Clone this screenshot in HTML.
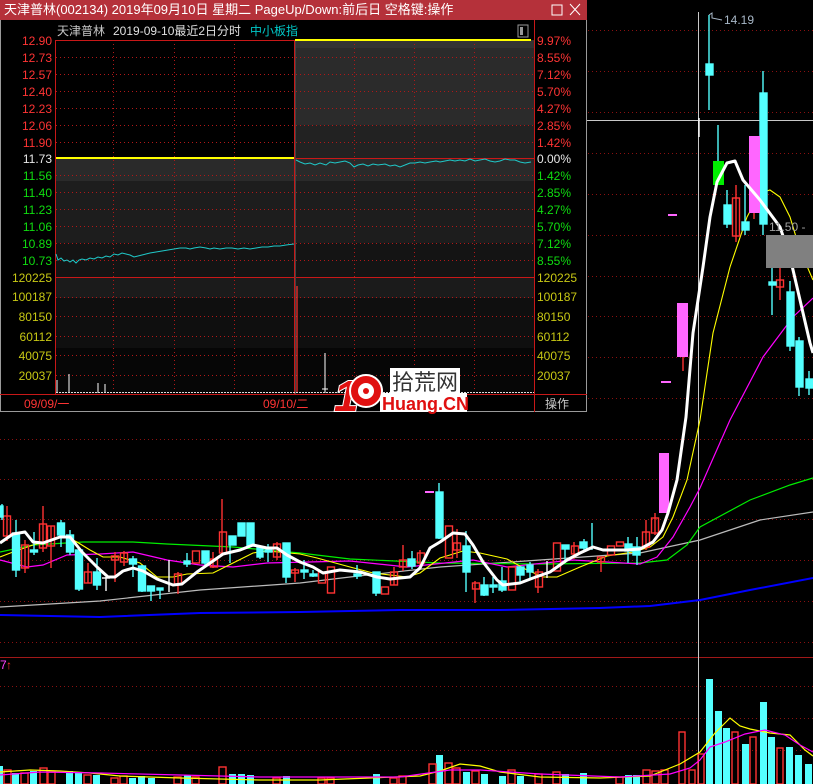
<!DOCTYPE html>
<html><head><meta charset="utf-8"><style>
html,body{margin:0;padding:0;background:#000;width:813px;height:784px;overflow:hidden}
svg{display:block}
text{font-family:"Liberation Sans","Noto Sans CJK SC",sans-serif}
</style></head><body>
<svg width="813" height="784" viewBox="0 0 813 784" xmlns="http://www.w3.org/2000/svg">
<rect width="813" height="784" fill="#000"/>
<!-- main grid -->
<g stroke="#8a1010" stroke-width="1" stroke-dasharray="1,3">
<line x1="0" y1="30.5" x2="813" y2="30.5"/><line x1="0" y1="71.5" x2="813" y2="71.5"/><line x1="0" y1="112.5" x2="813" y2="112.5"/><line x1="0" y1="153.5" x2="813" y2="153.5"/><line x1="0" y1="194.5" x2="813" y2="194.5"/><line x1="0" y1="235.5" x2="813" y2="235.5"/><line x1="0" y1="276.5" x2="813" y2="276.5"/><line x1="0" y1="316.5" x2="813" y2="316.5"/><line x1="0" y1="357.5" x2="813" y2="357.5"/><line x1="0" y1="398.5" x2="813" y2="398.5"/><line x1="0" y1="439.5" x2="813" y2="439.5"/><line x1="0" y1="479.5" x2="813" y2="479.5"/><line x1="0" y1="519.5" x2="813" y2="519.5"/><line x1="0" y1="560.5" x2="813" y2="560.5"/><line x1="0" y1="601.5" x2="813" y2="601.5"/><line x1="0" y1="642.5" x2="813" y2="642.5"/>
<line x1="0" y1="686.5" x2="813" y2="686.5"/><line x1="0" y1="718.5" x2="813" y2="718.5"/><line x1="0" y1="750.5" x2="813" y2="750.5"/>
</g>
<line x1="0" y1="657.5" x2="813" y2="657.5" stroke="#a01818"/>
<text x="0" y="669" font-size="12" fill="#ff40ff">7</text><text x="6" y="669" font-size="12" fill="#ff3030">↑</text>
<!-- crosshair -->
<line x1="698.5" y1="12" x2="698.5" y2="784" stroke="#c8c8c8"/>
<line x1="587" y1="120.5" x2="813" y2="120.5" stroke="#c8c8c8"/>
<!-- MA lines -->
<g fill="none">
<polyline stroke="#0000ff" stroke-width="2" points="0,615 100,617 200,613 300,612 400,610 500,610 600,608 650,606 700,600 750,590 813,578"/>
<polyline stroke="#bbbbbb" stroke-width="1.2" points="0,607 100,601 200,590 300,583 350,577 440,567 540,560 640,553 700,540 760,520 813,512"/>
<polyline stroke="#00ee00" stroke-width="1.2" points="0,552 33,545 83,542 133,542 167,544 233,547 300,553 350,559 440,563 540,564 640,563 667,560 687,545 700,527 750,500 790,485 813,478"/>
<polyline stroke="#ff00ff" stroke-width="1.2" points="0,560 27,567 43,565 67,555 100,554 133,552 167,560 200,565 233,567 267,563 350,561 407,567 473,560 507,567 573,560 640,564 657,557 673,537 690,507 700,488 730,420 763,357 793,317 813,298"/>
<polyline stroke="#ffff00" stroke-width="1.1" points="0,557 13,552 33,545 50,540 65,536 77,542 90,550 103,557 120,557 140,563 157,577 173,577 187,574 213,573 233,563 253,553 267,551 300,554 317,558 350,567 373,573 407,577 420,573 440,558 463,551 480,553 507,559 527,570 543,577 557,577 580,567 607,556 633,552 650,547 663,537 673,517 687,480 700,420 713,333 730,267 747,217 760,193 770,190 780,197 790,217 800,250 813,280"/>
</g>
<!-- candles left -->
<g stroke-width="1.4">
<g stroke="#ff3232" fill="none">
<line x1="7" y1="506" x2="7" y2="541"/><rect x="3.5" y="516" width="7" height="20"/>
<line x1="25" y1="540" x2="25" y2="573"/><rect x="21.5" y="545" width="7" height="23"/>
<line x1="43" y1="506" x2="43" y2="552"/><rect x="39.5" y="524" width="7" height="24"/>
<line x1="51" y1="526" x2="51" y2="568"/><rect x="47.5" y="526" width="7" height="20"/>
<line x1="88" y1="563" x2="88" y2="583"/><rect x="84.5" y="572" width="7" height="11"/>
<line x1="115" y1="552" x2="115" y2="582"/><rect x="111.5" y="556" width="7" height="4"/>
<line x1="124" y1="551" x2="124" y2="566"/><rect x="120.5" y="553" width="7" height="9"/>
<line x1="178" y1="572" x2="178" y2="594"/><rect x="174.5" y="574" width="7" height="10"/>
<rect x="192.5" y="551" width="7" height="12"/>
<line x1="213" y1="552" x2="213" y2="568"/><rect x="210.5" y="559" width="7" height="8"/>
<line x1="222" y1="499" x2="222" y2="553"/><rect x="219.5" y="532" width="7" height="21"/>
<line x1="277" y1="542" x2="277" y2="560"/><rect x="273.5" y="544" width="7" height="13"/>
<line x1="295" y1="568" x2="295" y2="582"/><rect x="291.5" y="570" width="7" height="3"/>
<rect x="318.5" y="572" width="7" height="11"/>
<rect x="327.5" y="567" width="7" height="26"/>
<rect x="381.5" y="587" width="7" height="7"/>
<line x1="394" y1="567" x2="394" y2="585"/><rect x="390.5" y="572" width="7" height="13"/>
<line x1="403" y1="545" x2="403" y2="571"/><rect x="399.5" y="560" width="7" height="7"/>
<line x1="420" y1="550" x2="420" y2="566"/><rect x="417.5" y="553" width="7" height="10"/>
<rect x="445.5" y="526" width="7" height="32"/>
<line x1="457" y1="529" x2="457" y2="558"/><rect x="453.5" y="543" width="7" height="7"/>
<line x1="475" y1="581" x2="475" y2="603"/><rect x="472.5" y="583" width="7" height="6"/>
<rect x="508.5" y="567" width="7" height="23"/>
<line x1="538" y1="569" x2="538" y2="593"/><rect x="535.5" y="572" width="7" height="15"/>
<rect x="553.5" y="543" width="7" height="28"/>
<line x1="574" y1="542" x2="574" y2="559"/><rect x="571.5" y="546" width="7" height="8"/>
<line x1="601" y1="557" x2="601" y2="572"/><rect x="597.5" y="557" width="7" height="5"/>
<rect x="607.5" y="546" width="7" height="9"/>
<rect x="616.5" y="542" width="7" height="4"/>
<line x1="646" y1="520" x2="646" y2="550"/><rect x="642.5" y="532" width="7" height="15"/>
<line x1="655" y1="513" x2="655" y2="535"/><rect x="651.5" y="518" width="7" height="15"/>
<line x1="780" y1="268" x2="780" y2="300"/><rect x="776.5" y="280" width="7" height="7"/>
<line x1="736" y1="185" x2="736" y2="242"/><rect x="732.5" y="198" width="7" height="38"/>
</g>
<g stroke="#54ffff" fill="#54ffff">
<line x1="2" y1="504" x2="2" y2="520"/><rect x="0" y="506" width="3" height="11"/>
<line x1="16" y1="520" x2="16" y2="577"/><rect x="12.5" y="533" width="7" height="37"/>
<line x1="34" y1="532" x2="34" y2="555"/><rect x="30.5" y="550" width="7" height="2"/>
<line x1="61" y1="520" x2="61" y2="547"/><rect x="57.5" y="523" width="7" height="12"/>
<line x1="70" y1="530" x2="70" y2="555"/><rect x="66.5" y="535" width="7" height="17"/>
<line x1="79" y1="550" x2="79" y2="591"/><rect x="75.5" y="550" width="7" height="39"/>
<line x1="97" y1="558" x2="97" y2="590"/><rect x="93.5" y="572" width="7" height="13"/>
<line x1="133" y1="556" x2="133" y2="577"/><rect x="129.5" y="559" width="7" height="5"/>
<line x1="142" y1="565" x2="142" y2="592"/><rect x="138.5" y="566" width="7" height="25"/>
<line x1="151" y1="586" x2="151" y2="601"/><rect x="147.5" y="586" width="7" height="5"/>
<line x1="160" y1="588" x2="160" y2="599"/><rect x="157" y="588" width="6" height="2"/>
<line x1="187" y1="553" x2="187" y2="567"/><rect x="184" y="561" width="6" height="3"/>
<line x1="205" y1="551" x2="205" y2="565"/><rect x="202" y="551" width="7" height="12"/>
<line x1="230" y1="536" x2="230" y2="563"/><rect x="229" y="536" width="7" height="9"/>
<rect x="238" y="523" width="7" height="13"/>
<line x1="250" y1="523" x2="250" y2="546"/><rect x="247" y="523" width="7" height="23"/>
<line x1="260" y1="547" x2="260" y2="559"/><rect x="257" y="547" width="6" height="10"/>
<line x1="268" y1="544" x2="268" y2="562"/><rect x="265" y="550" width="7" height="2"/>
<line x1="286" y1="543" x2="286" y2="583"/><rect x="283" y="543" width="7" height="34"/>
<line x1="304" y1="560" x2="304" y2="579"/><rect x="301" y="570" width="7" height="2"/>
<line x1="313" y1="570" x2="313" y2="577"/><rect x="310" y="574" width="7" height="2"/>
<line x1="357" y1="565" x2="357" y2="579"/><rect x="354" y="574" width="7" height="2"/>
<line x1="376" y1="572" x2="376" y2="596"/><rect x="373" y="572" width="7" height="21"/>
<line x1="412" y1="551" x2="412" y2="569"/><rect x="408" y="559" width="7" height="7"/>
<line x1="439" y1="483" x2="439" y2="539"/><rect x="436" y="492" width="7" height="46"/>
<line x1="466" y1="531" x2="466" y2="592"/><rect x="463" y="546" width="7" height="26"/>
<line x1="484" y1="577" x2="484" y2="596"/><rect x="481" y="585" width="7" height="10"/>
<line x1="493" y1="577" x2="493" y2="593"/><rect x="490" y="585" width="7" height="2"/>
<line x1="502" y1="567" x2="502" y2="592"/><rect x="499" y="581" width="7" height="9"/>
<line x1="520" y1="567" x2="520" y2="584"/><rect x="517" y="567" width="7" height="8"/>
<line x1="530" y1="562" x2="530" y2="580"/><rect x="527" y="565" width="6" height="7"/>
<line x1="565" y1="545" x2="565" y2="563"/><rect x="562" y="545" width="7" height="4"/>
<line x1="584" y1="539" x2="584" y2="551"/><rect x="580" y="542" width="7" height="6"/>
<line x1="592" y1="523" x2="592" y2="550"/>
<line x1="628" y1="537" x2="628" y2="563"/><rect x="625" y="544" width="7" height="7"/>
<line x1="637" y1="537" x2="637" y2="565"/><rect x="633" y="547" width="7" height="8"/>
<!-- right cyan -->
<line x1="709" y1="15" x2="709" y2="110"/><rect x="706" y="64" width="7" height="11"/>
<line x1="727" y1="190" x2="727" y2="228"/><rect x="724" y="205" width="7" height="19"/>
<line x1="745" y1="185" x2="745" y2="235"/><rect x="742" y="222" width="7" height="8"/>
<line x1="763" y1="71" x2="763" y2="235"/><rect x="760" y="93" width="7" height="131"/>
<line x1="772" y1="268" x2="772" y2="315"/><rect x="769" y="282" width="7" height="3"/>
<line x1="790" y1="281" x2="790" y2="351"/><rect x="787" y="292" width="7" height="54"/>
<line x1="799" y1="337" x2="799" y2="396"/><rect x="796" y="341" width="7" height="46"/>
<line x1="809" y1="371" x2="809" y2="395"/><rect x="806" y="379" width="7" height="9"/>
</g>
<g stroke="#fff"><line x1="106" y1="577" x2="106" y2="591"/><line x1="102" y1="578" x2="110" y2="578"/><line x1="169" y1="560" x2="169" y2="592"/><line x1="547" y1="561" x2="547" y2="578"/><line x1="699" y1="118" x2="699" y2="137"/></g>
<g fill="#ff66ff" stroke="none">
<rect x="659" y="453" width="10" height="60"/><rect x="677" y="303" width="11" height="54"/><rect x="749" y="136" width="11" height="77"/>
<rect x="425" y="491" width="9" height="2"/><rect x="668" y="214" width="9" height="2"/><rect x="661" y="381" width="10" height="2"/>
</g>
<line x1="683" y1="357" x2="683" y2="371" stroke="#ff3232"/>
<line x1="754" y1="213" x2="754" y2="219" stroke="#ff3232"/>
<rect x="713" y="161" width="11" height="24" fill="#00ee00"/><line x1="718" y1="125" x2="718" y2="161" stroke="#54ffff"/>
</g>
<!-- white MA -->
<polyline fill="none" stroke="#fff" stroke-width="3" stroke-linejoin="round" points="0,543 13,534 25,532 33,542 43,543 60,537 70,537 82,552 97,567 108,577 115,577 123,571 133,568 143,571 157,579 173,585 182,584 197,572 213,561 223,554 240,550 253,545 267,548 277,548 287,555 300,562 313,567 323,573 340,570 360,572 377,577 390,579 410,577 420,568 430,548 440,542 453,533 465,534 473,545 483,562 497,580 503,585 520,583 533,578 550,572 567,560 580,553 593,547 603,550 627,550 640,549 653,542 662,530 668,513 677,480 686,417 693,333 703,267 710,217 717,182 727,163 735,161 743,180 760,200 780,227 790,257 800,300 810,343 813,353"/>
<rect x="766" y="235" width="47" height="33" fill="#808080"/>
<text x="769" y="231" font-size="12" fill="#a0a0a0">11.50 -</text>
<text x="724" y="24" font-size="12" fill="#a8b8c8">14.19</text>
<polyline points="709,15 712,13 712,18 722,20" fill="none" stroke="#a8b8c8"/>
<!-- volume -->
<g stroke-width="1.4">
<g fill="#54ffff" stroke="none">
<rect x="0" y="766" width="3" height="18"/><rect x="12" y="773" width="7" height="11"/><rect x="30" y="771" width="7" height="13"/><rect x="66" y="771" width="7" height="13"/><rect x="75" y="772" width="7" height="12"/><rect x="93" y="775" width="7" height="9"/><rect x="129" y="778" width="7" height="6"/><rect x="138" y="776" width="7" height="8"/><rect x="148" y="778" width="7" height="6"/><rect x="184" y="775" width="7" height="9"/><rect x="229" y="774" width="7" height="10"/><rect x="238" y="774" width="7" height="10"/><rect x="247" y="775" width="7" height="9"/><rect x="283" y="776" width="7" height="8"/><rect x="373" y="774" width="7" height="10"/><rect x="436" y="755" width="7" height="29"/><rect x="463" y="772" width="7" height="12"/><rect x="481" y="774" width="7" height="10"/><rect x="499" y="776" width="7" height="8"/><rect x="517" y="776" width="7" height="8"/><rect x="562" y="774" width="7" height="10"/><rect x="580" y="773" width="7" height="11"/><rect x="625" y="775" width="7" height="9"/><rect x="633" y="775" width="7" height="9"/>
<rect x="706" y="679" width="7" height="105"/><rect x="715" y="711" width="7" height="73"/><rect x="723" y="728" width="7" height="56"/><rect x="742" y="744" width="7" height="40"/><rect x="760" y="702" width="7" height="82"/><rect x="768" y="737" width="7" height="47"/><rect x="786" y="747" width="7" height="37"/><rect x="795" y="755" width="7" height="29"/><rect x="805" y="764" width="7" height="20"/>
</g>
<g stroke="#ff3232" fill="none">
<rect x="4" y="770" width="7" height="14"/><rect x="21" y="773" width="7" height="11"/><rect x="40" y="768" width="7" height="16"/><rect x="48" y="772" width="7" height="12"/><rect x="84" y="775" width="7" height="9"/><rect x="111" y="778" width="7" height="6"/><rect x="120" y="776" width="7" height="8"/><rect x="174" y="777" width="7" height="7"/><rect x="192" y="777" width="7" height="7"/><rect x="219" y="767" width="7" height="17"/><rect x="273" y="778" width="7" height="6"/><rect x="318" y="778" width="7" height="6"/><rect x="327" y="778" width="7" height="6"/><rect x="390" y="778" width="7" height="6"/><rect x="399" y="776" width="7" height="8"/><rect x="429" y="764" width="7" height="20"/><rect x="445" y="763" width="7" height="21"/><rect x="453" y="768" width="7" height="16"/><rect x="472" y="771" width="7" height="13"/><rect x="508" y="770" width="7" height="14"/><rect x="535" y="774" width="7" height="10"/><rect x="553" y="772" width="7" height="12"/><rect x="616" y="777" width="7" height="7"/><rect x="643" y="770" width="7" height="14"/><rect x="652" y="771" width="7" height="13"/><rect x="661" y="770" width="7" height="14"/><rect x="679" y="732" width="6" height="52"/><rect x="689" y="770" width="6" height="14"/><rect x="698" y="754" width="6" height="30"/><rect x="732" y="732" width="6" height="52"/><rect x="750" y="737" width="6" height="47"/><rect x="777" y="748" width="6" height="36"/>
</g>
</g>
<polyline fill="none" stroke="#ffff00" stroke-width="1.2" points="0,772 30,770 60,771 90,773 120,776 180,778 260,780 320,780 420,776 440,771 460,764 480,766 500,772 540,777 600,778 650,776 680,764 700,752 715,733 730,718 740,726 750,729 770,733 790,735 805,750 813,756"/>
<polyline fill="none" stroke="#ff00ff" stroke-width="1.2" points="0,775 40,772 100,773 180,775 260,777 400,777 450,770 480,770 540,774 620,777 670,774 690,768 700,760 710,747 725,742 745,734 765,730 785,735 800,745 813,752"/>

<!-- POPUP -->
<rect x="0" y="0" width="587" height="412" fill="#000"/>
<rect x="0.5" y="0.5" width="586" height="411" fill="none" stroke="#9a9a9a"/>
<rect x="0" y="0" width="587" height="20" fill="#b5313a"/>
<text x="4" y="14" font-size="13" fill="#fff">天津普林(002134) 2019年09月10日 星期二 PageUp/Down:前后日 空格键:操作</text>
<rect x="552" y="5" width="10" height="10" fill="none" stroke="#fff" stroke-width="1"/>
<path d="M570 4 L580 15 M580 4 L570 15" stroke="#fff" stroke-width="1"/>
<text x="57" y="35" font-size="12" fill="#c8c8c8">天津普林</text>
<text x="113" y="35" font-size="12" fill="#e0e0e0">2019-09-10最近2日分时</text>
<text x="250" y="35" font-size="12" fill="#00c8c8">中小板指</text>
<rect x="518" y="25" width="10" height="12" fill="none" stroke="#999"/><rect x="520" y="27" width="3" height="8" fill="#999"/>
<!-- bands -->
<rect x="295" y="40" width="240" height="8" fill="#333"/>
<rect x="295" y="48" width="240" height="77" fill="#2b2b2b"/>
<rect x="295" y="125" width="240" height="33" fill="#222"/>
<rect x="56" y="158" width="479" height="23" fill="#2a2a2a"/>
<rect x="56" y="181" width="479" height="62" fill="#1d1d1d"/>
<rect x="56" y="243" width="479" height="34" fill="#141414"/>
<rect x="56" y="277" width="479" height="21" fill="#1b1b1b"/>
<rect x="56" y="298" width="479" height="50" fill="#0f0f0f"/>
<rect x="56" y="348" width="479" height="46" fill="#060606"/>
<g stroke="#b01818" stroke-dasharray="1,3">
<line x1="56" y1="57.5" x2="535" y2="57.5"/><line x1="56" y1="74.5" x2="535" y2="74.5"/><line x1="56" y1="91.5" x2="535" y2="91.5"/><line x1="56" y1="108.5" x2="535" y2="108.5"/><line x1="56" y1="125.5" x2="535" y2="125.5"/><line x1="56" y1="142.5" x2="535" y2="142.5"/><line x1="56" y1="175.5" x2="535" y2="175.5"/><line x1="56" y1="192.5" x2="535" y2="192.5"/><line x1="56" y1="209.5" x2="535" y2="209.5"/><line x1="56" y1="226.5" x2="535" y2="226.5"/><line x1="56" y1="243.5" x2="535" y2="243.5"/><line x1="56" y1="260.5" x2="535" y2="260.5"/>
<line x1="56" y1="297.5" x2="535" y2="297.5"/><line x1="56" y1="316.5" x2="535" y2="316.5"/><line x1="56" y1="336.5" x2="535" y2="336.5"/><line x1="56" y1="355.5" x2="535" y2="355.5"/><line x1="56" y1="375.5" x2="535" y2="375.5"/>
<line x1="113.5" y1="40" x2="113.5" y2="394"/><line x1="174.5" y1="40" x2="174.5" y2="394"/><line x1="234.5" y1="40" x2="234.5" y2="394"/><line x1="354.5" y1="40" x2="354.5" y2="394"/><line x1="414.5" y1="40" x2="414.5" y2="394"/><line x1="474.5" y1="40" x2="474.5" y2="394"/>
</g>
<g stroke="#c81818" fill="none">
<rect x="55.5" y="40.5" width="239" height="354"/>
<line x1="534.5" y1="20" x2="534.5" y2="412"/>
<line x1="0" y1="394.5" x2="587" y2="394.5"/>
<line x1="56" y1="158.5" x2="534" y2="158.5"/>
<line x1="56" y1="277.5" x2="534" y2="277.5"/>
</g>
<line x1="295.5" y1="40" x2="295.5" y2="394" stroke="#444"/>
<line x1="295" y1="40" x2="531" y2="40" stroke="#ffff00" stroke-width="2"/>
<line x1="56" y1="158" x2="294" y2="158" stroke="#ffff00" stroke-width="2"/>
<polyline fill="none" stroke="#20c8c8" stroke-width="1" points="296,160 300,162 305,164 310,163 315,165 320,163 326,165 330,162 335,163 340,162 345,161 350,163 354,167 358,165 363,164 368,166 373,164 378,165 385,164 390,166 395,165 400,167 405,165 410,163 415,163 420,162 425,163 430,162 436,161 440,162 445,161 450,160 455,161 460,160 465,161 470,159 475,161 480,160 485,159 490,161 495,162 500,161 505,159 510,160 515,160 520,162 525,163 531,162"/>
<polyline fill="none" stroke="#20c8c8" stroke-width="1" points="56,254 58,260 61,258 64,261 67,260 70,262 73,260 76,263 79,260 82,259 86,260 90,258 94,259 98,257 102,258 106,256 110,257 114,254 118,255 122,253 126,254 130,255 134,257 138,256 142,255 146,254 150,253 156,252 162,251 168,250 174,249 180,248 186,248 190,249 194,248 200,247 206,248 210,249 214,248 220,249 226,248 232,248 238,249 244,248 250,249 256,248 262,247 268,247 274,246 280,246 286,245 294,244"/>
<!-- vol spikes -->
<g stroke="#fff" stroke-width="1"><line x1="57" y1="380" x2="57" y2="393"/><line x1="69" y1="374" x2="69" y2="393"/><line x1="98" y1="383" x2="98" y2="393"/><line x1="105" y1="384" x2="105" y2="393"/><line x1="325" y1="353" x2="325" y2="393"/><line x1="322" y1="389" x2="328" y2="389"/></g>
<line x1="297" y1="286" x2="297" y2="393" stroke="#ff3030" stroke-width="1.2"/>
<line x1="56" y1="392.5" x2="534" y2="392.5" stroke="#ddd" stroke-width="1" stroke-dasharray="2,1"/>
<!-- labels -->
<g font-size="12" text-anchor="end">
<g fill="#ff3434"><text x="52" y="45">12.90</text><text x="52" y="62">12.73</text><text x="52" y="79">12.57</text><text x="52" y="96">12.40</text><text x="52" y="113">12.23</text><text x="52" y="130">12.06</text><text x="52" y="147">11.90</text></g>
<text x="52" y="163" fill="#e8e8e8">11.73</text>
<g fill="#10dd10"><text x="52" y="180">11.56</text><text x="52" y="197">11.40</text><text x="52" y="214">11.23</text><text x="52" y="231">11.06</text><text x="52" y="248">10.89</text><text x="52" y="265">10.73</text></g>
<g fill="#c8c814"><text x="52" y="282">120225</text><text x="52" y="301">100187</text><text x="52" y="321">80150</text><text x="52" y="341">60112</text><text x="52" y="360">40075</text><text x="52" y="380">20037</text></g>
</g>
<g font-size="12">
<g fill="#ff3434"><text x="537" y="45">9.97%</text><text x="537" y="62">8.55%</text><text x="537" y="79">7.12%</text><text x="537" y="96">5.70%</text><text x="537" y="113">4.27%</text><text x="537" y="130">2.85%</text><text x="537" y="147">1.42%</text></g>
<text x="537" y="163" fill="#e8e8e8">0.00%</text>
<g fill="#10dd10"><text x="537" y="180">1.42%</text><text x="537" y="197">2.85%</text><text x="537" y="214">4.27%</text><text x="537" y="231">5.70%</text><text x="537" y="248">7.12%</text><text x="537" y="265">8.55%</text></g>
<g fill="#c8c814"><text x="537" y="282">120225</text><text x="537" y="301">100187</text><text x="537" y="321">80150</text><text x="537" y="341">60112</text><text x="537" y="360">40075</text><text x="537" y="380">20037</text></g>
<text x="24" y="408" fill="#ff3434">09/09/一</text>
<text x="263" y="408" fill="#ff3434">09/10/二</text>
<text x="545" y="408" fill="#c8c8c8">操作</text>
</g>
<!-- logo -->
<rect x="390" y="368" width="70" height="26" fill="#fff"/>
<text x="392" y="390" font-size="22" fill="#333">拾荒网</text>
<rect x="380" y="393" width="87" height="19" fill="#fff"/>
<text x="382" y="410" font-size="18" font-weight="bold" fill="#e01010">Huang.CN</text>
<text x="334" y="411" font-size="44" font-weight="bold" fill="#e01010" stroke="#fff" stroke-width="2" paint-order="stroke" font-style="italic">1</text>
<circle cx="366" cy="391" r="16" fill="#e01010" stroke="#fff" stroke-width="2"/>
<circle cx="366" cy="391" r="8" fill="#fff"/><circle cx="366" cy="391" r="3" fill="#e01010"/>
</svg>
</body></html>
